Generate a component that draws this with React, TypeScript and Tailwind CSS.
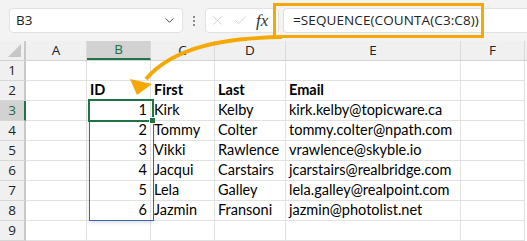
import React from 'react';
import { X, Check, ChevronDown } from 'lucide-react';

const cols = [26, 63, 64, 64, 71, 175, 64];
const letters = ['A', 'B', 'C', 'D', 'E', 'F'];

type Row = { a?: string; b?: string; c?: string; d?: string; e?: string; bold?: boolean };

const rows: Row[] = [
  {},
  { b: 'ID', c: 'First', d: 'Last', e: 'Email', bold: true },
  { b: '1', c: 'Kirk', d: 'Kelby', e: 'kirk.kelby@topicware.ca' },
  { b: '2', c: 'Tommy', d: 'Colter', e: 'tommy.colter@npath.com' },
  { b: '3', c: 'Vikki', d: 'Rawlence', e: 'vrawlence@skyble.io' },
  { b: '4', c: 'Jacqui', d: 'Carstairs', e: 'jcarstairs@realbridge.com' },
  { b: '5', c: 'Lela', d: 'Galley', e: 'lela.galley@realpoint.com' },
  { b: '6', c: 'Jazmin', d: 'Fransoni', e: 'jazmin@photolist.net' },
  {},
];

const cellFont = { fontFamily: 'Lato, "Liberation Sans", sans-serif' };

export default function App() {
  return (
    <div className="relative w-[527px] h-[241px] overflow-hidden bg-white font-['Open_Sans',sans-serif] text-[#222]">
      {/* Formula bar */}
      <div className="h-[41px] bg-[#f3f3f3] flex items-start pt-[8px]">
        <div className="ml-[9px] w-[174px] h-[25px] bg-white border border-[#e1e1e1] rounded-[4px] flex items-center justify-between pl-[6px] pr-[5px]">
          <span className="text-[13.5px] leading-none">B3</span>
          <ChevronDown className="w-[15px] h-[15px] text-[#444]" strokeWidth={1.5} />
        </div>
        <div className="w-[22px] h-[25px] flex flex-col items-center justify-center gap-[2px]">
          <span className="w-[2px] h-[2px] bg-[#8a8a8a]" />
          <span className="w-[2px] h-[2px] bg-[#8a8a8a]" />
          <span className="w-[2px] h-[2px] bg-[#8a8a8a]" />
        </div>
        <div className="w-[74px] h-[25px] bg-white border border-[#e1e1e1] rounded-[4px] flex items-center pl-[4px] gap-[8px]">
          <X className="w-[15px] h-[15px] text-[#c4c4c4]" strokeWidth={1.25} />
          <Check className="w-[15px] h-[15px] text-[#c4c4c4]" strokeWidth={1.25} />
          <span className="font-['Liberation_Serif',serif] italic text-[17px] leading-none text-[#333]">fx</span>
        </div>
        <div className="ml-[4px] flex-1 h-[25px] bg-white border border-[#e1e1e1] border-r-0 rounded-l-[4px] flex items-center pl-[9px]">
          <span className="text-[13.5px] leading-none tracking-[0.1px]">=SEQUENCE(COUNTA(C3:C8))</span>
        </div>
      </div>

      {/* Column headers */}
      <div className="flex h-[20px] bg-[#f0f0f0] border-b border-[#d2d2d2]">
        <div className="w-[26px] border-r-2 border-[#c8c8c8] relative">
          <svg className="absolute right-[3px] bottom-[3px]" width="13" height="13" viewBox="0 0 13 13">
            <polygon points="13,0 13,13 0,13" fill="#c6c6c6" />
          </svg>
        </div>
        {letters.map((l, i) => (
          <div
            key={l}
            style={{ width: cols[i + 1] - (i === 0 ? 2 : 0) }}
            className={`flex items-center justify-center text-[13.5px] border-r border-[#dadada] ${
              l === 'B' ? 'bg-[#d2d2d2] text-[#1e6e42] border-b-2 border-b-[#217346]' : ''
            }`}
          >
            {l}
          </div>
        ))}
      </div>

      {/* Rows */}
      {rows.map((r, i) => {
        const n = i + 1;
        const active = n === 3;
        return (
          <div key={n} className="flex h-[20px]">
            <div
              className={`w-[26px] flex items-center justify-center text-[13.5px] border-b border-[#d6d6d6] ${
                active ? 'bg-[#d2d2d2] text-[#1e6e42] border-r-2 border-r-[#217346]' : 'bg-[#f0f0f0] border-r-2 border-r-[#c8c8c8]'
              }`}
            >
              {n}
            </div>
            {[r.a, r.b, r.c, r.d, r.e, undefined].map((v, j) => (
              <div
                key={j}
                style={{ width: cols[j + 1] - (j === 0 ? 2 : 0), ...cellFont }}
                className={`border-r border-b border-[#e1e1e1] flex items-end pb-[1px] px-[3px] text-[14.5px] leading-[18px] whitespace-nowrap ${
                  j === 1 && !r.bold ? 'justify-end' : ''
                } ${r.bold ? 'font-bold' : ''} text-black`}
              >
                {v}
              </div>
            ))}
          </div>
        );
      })}

      {/* Spill range border */}
      <div className="absolute left-[89px] top-[100px] w-[65px] h-[121px] border border-[#3465b6] shadow-[0_2px_4px_rgba(0,0,0,0.12)]" />
      {/* Active cell */}
      <div className="absolute left-[88px] top-[99px] w-[66px] h-[23px] border-2 border-[#217346]" />
      <div className="absolute left-[149px] top-[117px] w-[7px] h-[7px] bg-[#217346] border border-white" />

      {/* Callout box */}
      <div className="absolute left-[273px] top-[3px] w-[211px] h-[35px] border-[3px] border-[#f5a800]" />

      {/* Arrow */}
      <svg className="absolute left-0 top-0 pointer-events-none" width="527" height="241" viewBox="0 0 527 241">
        <path d="M 282 37 C 230 38, 175 45, 146 79" fill="none" stroke="#f5a800" strokeWidth="4" />
        <polygon points="130,79 152,84 137,95" fill="#f5a800" />
      </svg>
    </div>
  );
}
